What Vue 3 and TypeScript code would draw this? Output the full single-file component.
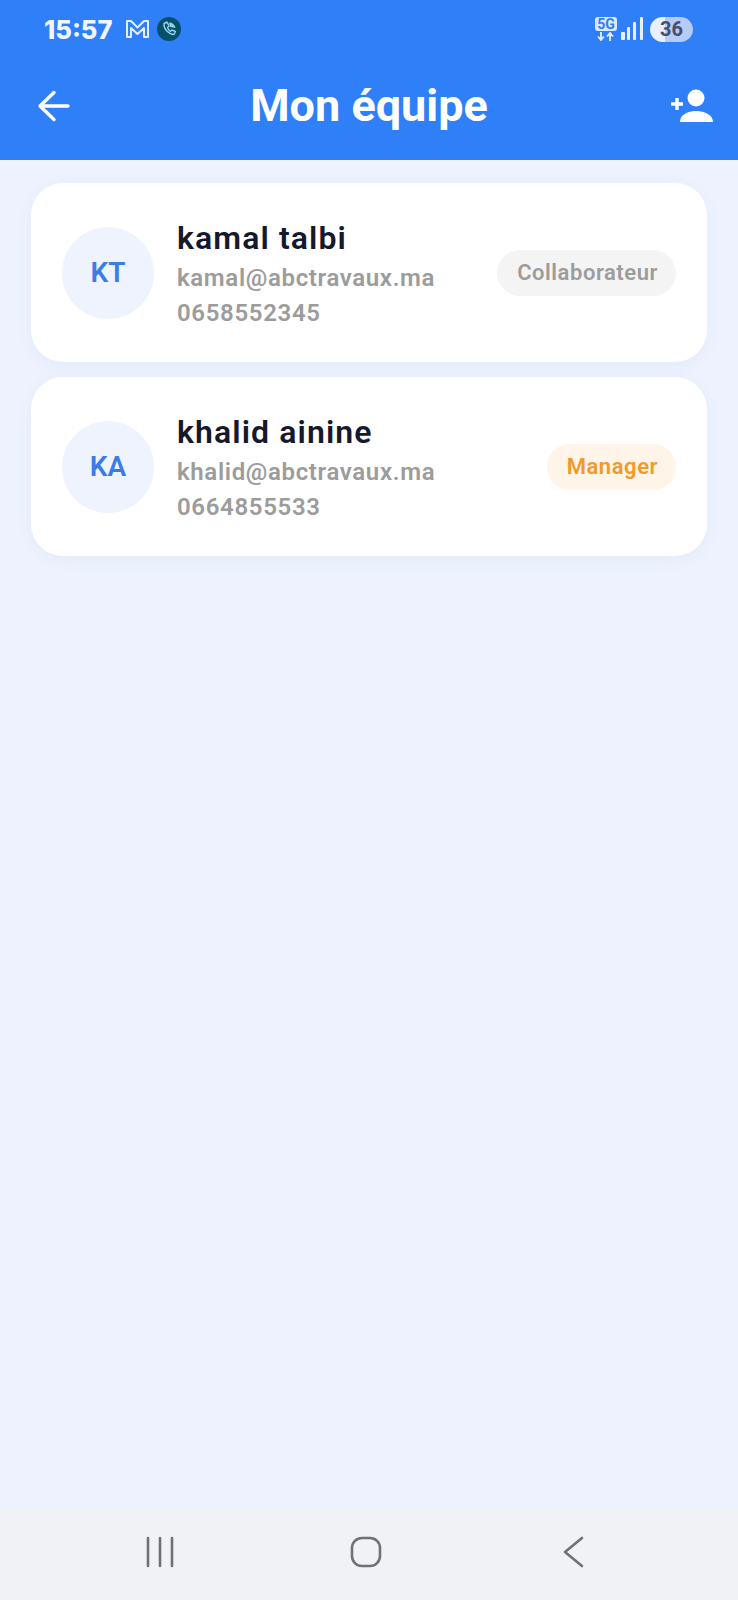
<template>
  <div class="page">
    <header class="top">
      <div class="status">
        <div class="status-left">
          <span class="time">15:57</span>
          <svg class="mail" width="25" height="20" viewBox="0 0 25 20">
            <path d="M2 2h4l6.500 6.500L19 2h4v16h-4V9l-6.500 6L6 9v9H2z" fill="none" stroke="#e4eeff" stroke-width="2" stroke-linejoin="round" />
          </svg>
          <svg width="24" height="24" viewBox="0 0 24 24">
            <circle cx="12" cy="12" r="12" fill="#06506a" />
            <path d="M7 6.500c-.5 5 4 10.500 10 11l1.500-3-3.500-1.500-1.500 1.500c-1.500-1-2.500-2.500-3-4l1.500-1.500L10 5z" fill="none" stroke="#8fd0e8" stroke-width="1.400" stroke-linejoin="round" />
            <path d="M12 5.500c3 0 6 2 6.500 5.500l-5.500-1z" fill="#8fd0e8" />
          </svg>
        </div>
        <div class="status-right">
          <div class="net">
            <span class="net-label">5G</span>
            <svg width="20" height="9" viewBox="0 0 20 9">
              <path d="M5 0v7M2 4.500 5 8l3-3.500M14 9V2M11 4.500 14 1l3 3.500" fill="none" stroke="#e8f0ff" stroke-width="1.800" />
            </svg>
          </div>
          <svg width="23" height="24" viewBox="0 0 23 24">
            <rect x="0" y="15" width="4" height="8" rx="1" fill="#e8f0ff" />
            <rect x="6" y="10" width="3" height="13" rx="1" fill="#e8f0ff" />
            <rect x="12" y="5" width="3" height="18" rx="1" fill="#e8f0ff" />
            <rect x="19" y="0" width="3" height="23" rx="1" fill="#e8f0ff" />
          </svg>
          <div class="battery">36</div>
        </div>
      </div>
      <div class="bar">
        <svg width="34" height="32" viewBox="0 0 34 32">
          <path d="M31 16H3M17 2.500 3 16l14 13.500" fill="none" stroke="#fff" stroke-width="3.400" stroke-linecap="round" stroke-linejoin="round" />
        </svg>
        <h1>Mon équipe</h1>
        <svg width="44" height="34" viewBox="0 0 44 34">
          <circle cx="26" cy="9" r="8.500" fill="#fff" />
          <path d="M10 33c0-7 7-11 16-11s17 4 17 11z" fill="#fff" />
          <path d="M1 15h12M7 9v12" fill="none" stroke="#fff" stroke-width="3.400" />
        </svg>
      </div>
    </header>

    <main class="list">
      <article v-for="m in members" :key="m.email" class="card">
        <div class="avatar">{{ m.initials }}</div>
        <div class="info">
          <div class="name">{{ m.name }}</div>
          <div class="line">{{ m.email }}</div>
          <div class="line">{{ m.phone }}</div>
        </div>
        <span class="badge" :class="m.tone">{{ m.role }}</span>
      </article>
    </main>

    <nav class="sysnav">
      <svg width="30" height="32" viewBox="0 0 30 32">
        <path d="M3 2v28M15 2v28M27 2v28" stroke="#6f7177" stroke-width="2.600" stroke-linecap="round" />
      </svg>
      <svg class="home" width="32" height="32" viewBox="0 0 32 32">
        <rect x="2" y="2" width="28" height="28" rx="10" fill="none" stroke="#6f7177" stroke-width="2.600" />
      </svg>
      <svg width="22" height="32" viewBox="0 0 22 32">
        <path d="M19 2 2 16l17 14" fill="none" stroke="#6f7177" stroke-width="2.600" stroke-linecap="round" stroke-linejoin="round" />
      </svg>
    </nav>
  </div>
</template>

<script setup lang="ts">
interface Member {
  initials: string;
  name: string;
  email: string;
  phone: string;
  role: string;
  tone: string;
}

const members: Member[] = [
  {
    initials: 'KT',
    name: 'kamal talbi',
    email: 'kamal@abctravaux.ma',
    phone: '0658552345',
    role: 'Collaborateur',
    tone: 'grey',
  },
  {
    initials: 'KA',
    name: 'khalid ainine',
    email: 'khalid@abctravaux.ma',
    phone: '0664855533',
    role: 'Manager',
    tone: 'orange',
  },
];
</script>

<style>
html,
body {
  margin: 0;
  background: #eef2fe;
}
</style>

<style scoped>
.page {
  display: flex;
  flex-direction: column;
  width: 738px;
  height: 1600px;
  background: #eef2fe;
  font-family: Roboto, "Liberation Sans", sans-serif;
}

.top {
  display: flex;
  flex-direction: column;
  box-sizing: border-box;
  height: 160px;
  padding: 16px 24px 0 37px;
  background: #2f7ff8;
  color: #fff;
}

.status {
  display: flex;
  align-items: center;
  justify-content: space-between;
  height: 26px;
  padding: 0 21px 0 7px;
}

.status-left,
.status-right {
  display: flex;
  align-items: center;
}

.time {
  margin-right: 13px;
  font-family: Inter, Roboto, sans-serif;
  font-size: 25.5px;
  font-weight: 800;
  color: #f2f7ff;
}

.mail {
  margin-right: 7px;
}

.net {
  display: flex;
  flex-direction: column;
  align-items: center;
  margin-right: 4px;
}

.net-label {
  width: 22px;
  height: 14px;
  margin-bottom: 1px;
  border-radius: 3px;
  background: #dce8fe;
  color: #2f7ff8;
  font-size: 14px;
  font-weight: 700;
  line-height: 14px;
  text-align: center;
}

.battery {
  width: 43px;
  height: 25px;
  margin-left: 6px;
  border-radius: 13px;
  background: linear-gradient(90deg, #eaf0fb 0 35%, #b6cbf7 35%);
  color: #444f6a;
  font-size: 20px;
  font-weight: 700;
  line-height: 25px;
  text-align: center;
}

.bar {
  display: flex;
  flex: 1;
  align-items: center;
  justify-content: space-between;
  padding-top: 9px;
}

h1 {
  margin: 0 3px 0 0;
  font-size: 45px;
  font-weight: 700;
  line-height: 52px;
}

.list {
  display: flex;
  flex: 1;
  flex-direction: column;
  gap: 15px;
  padding: 23px 31px 0;
}

.card {
  display: flex;
  align-items: center;
  box-sizing: border-box;
  height: 179px;
  padding: 0 31px;
  border-radius: 32px;
  background: #fff;
  box-shadow: 0 4px 16px rgba(47, 100, 200, 0.05);
}

.avatar {
  display: flex;
  flex-shrink: 0;
  align-items: center;
  justify-content: center;
  width: 92px;
  height: 92px;
  margin-right: 23px;
  border-radius: 50%;
  background: #eff3fd;
  color: #3a7de8;
  font-size: 28px;
  font-weight: 600;
}

.info {
  flex: 1;
  min-width: 0;
  padding-top: 4px;
}

.name {
  margin-bottom: 3px;
  color: #16182b;
  font-size: 32px;
  font-weight: 600;
  letter-spacing: 1.1px;
  line-height: 40px;
}

.line {
  color: #9c9c9c;
  font-size: 24px;
  font-weight: 600;
  letter-spacing: 0.65px;
  line-height: 35.5px;
}

.badge {
  padding: 0 18px 0 20px;
  border-radius: 23px;
  font-size: 22px;
  font-weight: 600;
  letter-spacing: 0.55px;
  line-height: 46px;
}

.grey {
  background: #f4f4f4;
  color: #9c9c9c;
}

.orange {
  background: #fef4e7;
  color: #f09a2c;
}

.sysnav {
  display: flex;
  align-items: center;
  justify-content: space-between;
  box-sizing: border-box;
  height: 92px;
  padding: 0 153px 4px 145px;
  background: #f1f2f6;
}

.home {
  margin-right: 6px;
}
</style>
